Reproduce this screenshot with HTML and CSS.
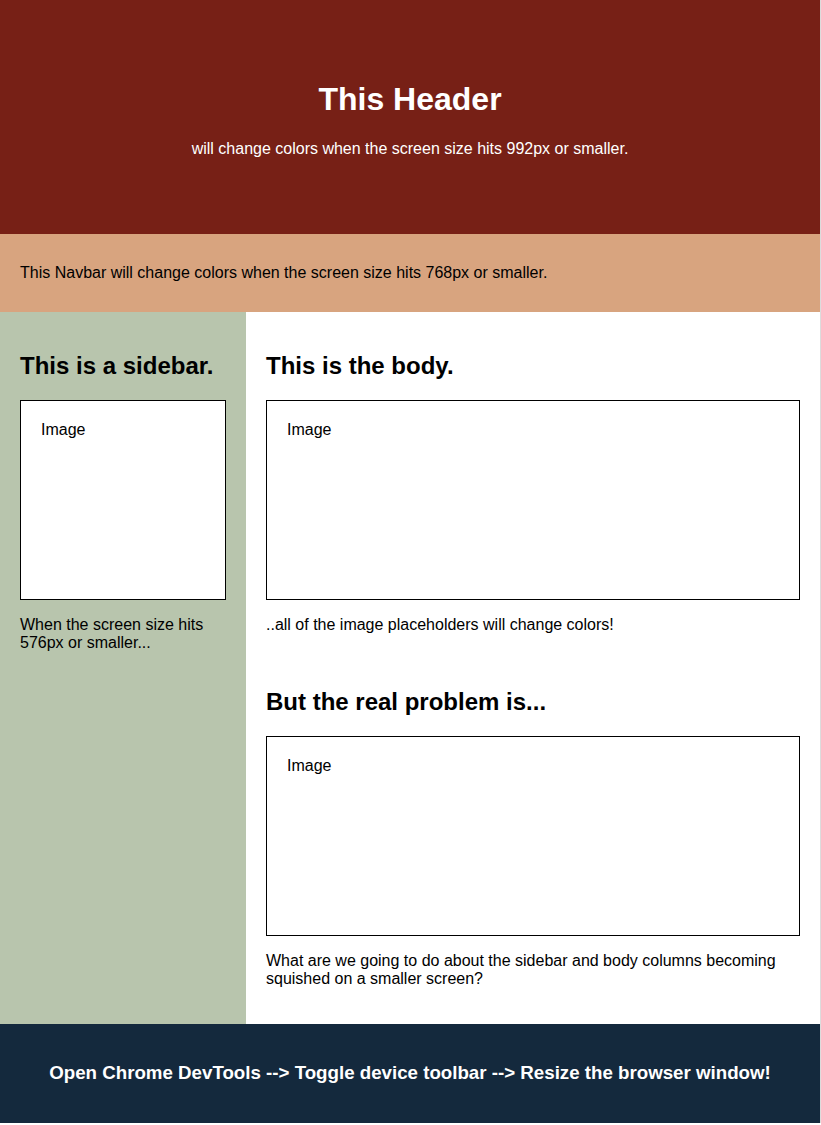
FILE: index.html
```html
<!DOCTYPE html>
<html lang="en">
<head>
<meta charset="utf-8">
<title>Responsive Layout</title>
<link rel="stylesheet" href="styles.css">
</head>
<body>
<div class="page">
  <header class="header">
    <h1>This Header</h1>
    <p>will change colors when the screen size hits 992px or smaller.</p>
  </header>
  <nav class="navbar">
    <p>This Navbar will change colors when the screen size hits 768px or smaller.</p>
  </nav>
  <main class="main">
    <aside class="sidebar">
      <h2>This is a sidebar.</h2>
      <div class="image">Image</div>
      <p>When the screen size hits 576px or smaller...</p>
    </aside>
    <section class="content">
      <div class="block">
        <h2>This is the body.</h2>
        <div class="image">Image</div>
        <p>..all of the image placeholders will change colors!</p>
      </div>
      <div class="block block-next">
        <h2>But the real problem is...</h2>
        <div class="image">Image</div>
        <p>What are we going to do about the sidebar and body columns becoming squished on a smaller screen?</p>
      </div>
    </section>
  </main>
  <footer class="footer">
    <h3>Open Chrome DevTools --&gt; Toggle device toolbar --&gt; Resize the browser window!</h3>
  </footer>
</div>
</body>
</html>
```
FILE: styles.css
```css
html, body {
  margin: 0;
  padding: 0;
}

body {
  font-family: "Liberation Sans", Arial, sans-serif;
  color: #000;
  background: #ffffff;
}

.page {
  border-right: 1px solid #dcdcdc;
}

.header {
  background: #772016;
  color: #ffffff;
  text-align: center;
  padding: 60px 20px;
}

.header h1 {
  font-size: 32px;
  margin: 21.44px 0;
}

.header p {
  margin: 16px 0;
}

.navbar {
  background: #d8a47f;
  padding: 30px 20px;
}

.navbar p {
  margin: 0;
}

.main {
  display: flex;
}

.sidebar {
  flex: 0 0 30%;
  background: #b8c5ad;
  padding: 20px;
  box-sizing: border-box;
}

.content {
  flex: 1 1 70%;
  padding: 20px;
  box-sizing: border-box;
  background: #ffffff;
}

h2 {
  font-size: 24px;
  margin: 19.92px 0;
}

p {
  margin: 16px 0;
}

.image {
  box-sizing: border-box;
  height: 200px;
  border: 1px solid #000;
  background: #ffffff;
  padding: 20px;
}

.block-next {
  padding-top: 18px;
}

.footer {
  background: #14293d;
  color: #ffffff;
  text-align: center;
  padding: 20px;
}

.footer h3 {
  font-size: 18.72px;
  margin: 18.72px 0;
}
```
